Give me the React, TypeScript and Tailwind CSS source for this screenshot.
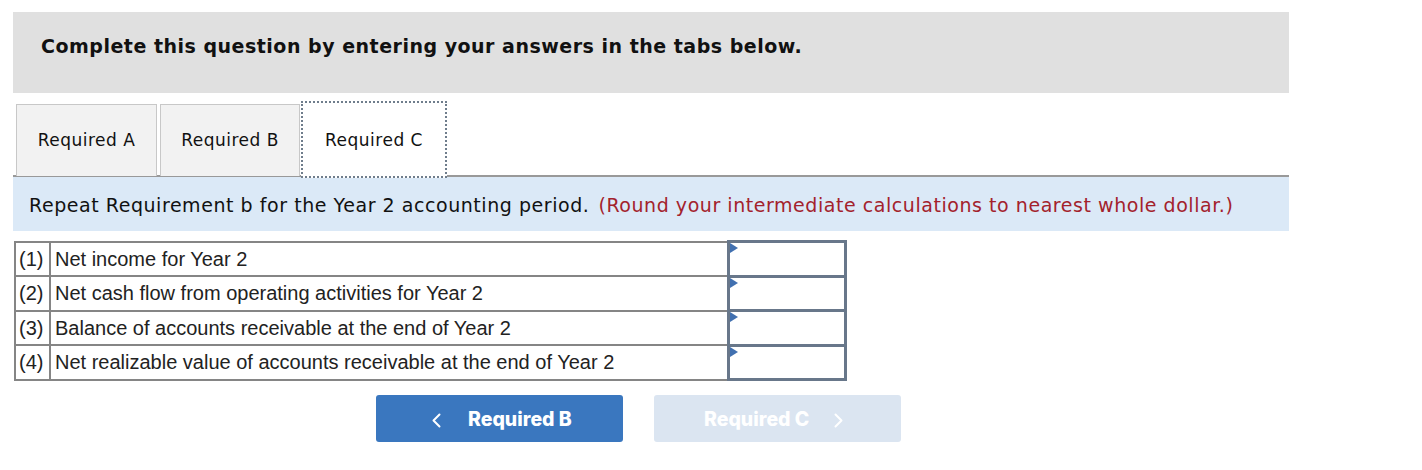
const rows = [
  { n: '(1)', label: 'Net income for Year 2' },
  { n: '(2)', label: 'Net cash flow from operating activities for Year 2' },
  { n: '(3)', label: 'Balance of accounts receivable at the end of Year 2' },
  { n: '(4)', label: 'Net realizable value of accounts receivable at the end of Year 2' },
]

function Chevron({ dir }: { dir: 'left' | 'right' }) {
  return (
    <svg width="10" height="15" viewBox="0 0 10 15" fill="none">
      <path
        d={dir === 'left' ? 'M8.5 1.5 L2.5 7.5 L8.5 13.5' : 'M1.5 1.5 L7.5 7.5 L1.5 13.5'}
        stroke="currentColor"
        strokeWidth="2"
        strokeLinecap="round"
        strokeLinejoin="round"
      />
    </svg>
  )
}

export default function App() {
  return (
    <div className="min-h-[470px] bg-white pt-[12px] pl-[13px]" style={{ fontFamily: '"DejaVu Sans", Verdana, sans-serif' }}>
      <div className="w-[1276px]">
        {/* Header */}
        <div className="h-[81px] bg-[#e0e0e0] pl-[28px] pt-[23px]">
          <h1 className="text-[19px] tracking-[0.5px] font-bold text-[#111] leading-[22px]">
            Complete this question by entering your answers in the tabs below.
          </h1>
        </div>

        {/* Tabs */}
        <div className="mt-[11px] pl-[3px] flex items-start h-[71px] text-[17px] tracking-[0.5px] text-[#111]">
          <div className="h-[72px] w-[141px] bg-[#f2f2f2] border border-[#c8c8c8] border-b-0 flex items-center justify-center pt-[1px]">
            Required A
          </div>
          <div className="ml-[3px] h-[72px] w-[140px] bg-[#f2f2f2] border border-[#c8c8c8] border-b-0 flex items-center justify-center pt-[1px]">
            Required B
          </div>
          <div className="relative z-10 ml-[1px] -mt-[3px] h-[77px] w-[146px] bg-white border-2 border-dotted border-[#6f7d8c] flex items-center justify-center pt-[3px]">
            Required C
          </div>
        </div>

        {/* Instruction */}
        <div className="border-t-2 border-[#999] bg-[#dbe9f7] h-[56px] pl-[16px] pt-[3px] flex items-center text-[19px] tracking-[0.55px] text-[#111]">
          <span>Repeat Requirement b for the Year 2 accounting period.</span>
          <span className="ml-[9px] text-[#a3222c]">(Round your intermediate calculations to nearest whole dollar.)</span>
        </div>
      </div>

      {/* Table */}
      <table
        className="mt-[9px] ml-px border-collapse text-[20px] text-[#222]"
        style={{ fontFamily: '"Liberation Sans", Arial, sans-serif' }}
      >
        <tbody>
          {rows.map((r) => (
            <tr key={r.n} className="h-[34.5px]">
              <td className="w-[35px] border-2 border-[#858585] px-[3px] leading-none">{r.n}</td>
              <td className="w-[678px] border-2 border-[#858585] pl-[4px] leading-none">{r.label}</td>
              <td className="relative w-[117px] border-[3px] border-[#68778a] p-0">
                <span className="absolute left-0 top-0 w-0 h-0 border-t-[5px] border-b-[5px] border-l-[8px] border-t-transparent border-b-transparent border-l-[#4170b0]" />
              </td>
            </tr>
          ))}
        </tbody>
      </table>

      {/* Navigation */}
      <div className="mt-[14px] ml-[363px] flex gap-[31px]" style={{ fontFamily: 'Inter, sans-serif' }}>
        <button className="w-[247px] h-[47px] rounded-[3px] bg-[#3a77bf] text-white font-extrabold text-[19.5px] flex items-center pl-[55px] pt-[3px]">
          <Chevron dir="left" />
          <span className="ml-[27px]">Required B</span>
        </button>
        <button className="w-[247px] h-[47px] rounded-[3px] bg-[#dbe5f1] text-white font-extrabold text-[19.5px] flex items-center pl-[50px] pt-[3px]">
          <span className="mr-[25px]">Required C</span>
          <Chevron dir="right" />
        </button>
      </div>
    </div>
  )
}
